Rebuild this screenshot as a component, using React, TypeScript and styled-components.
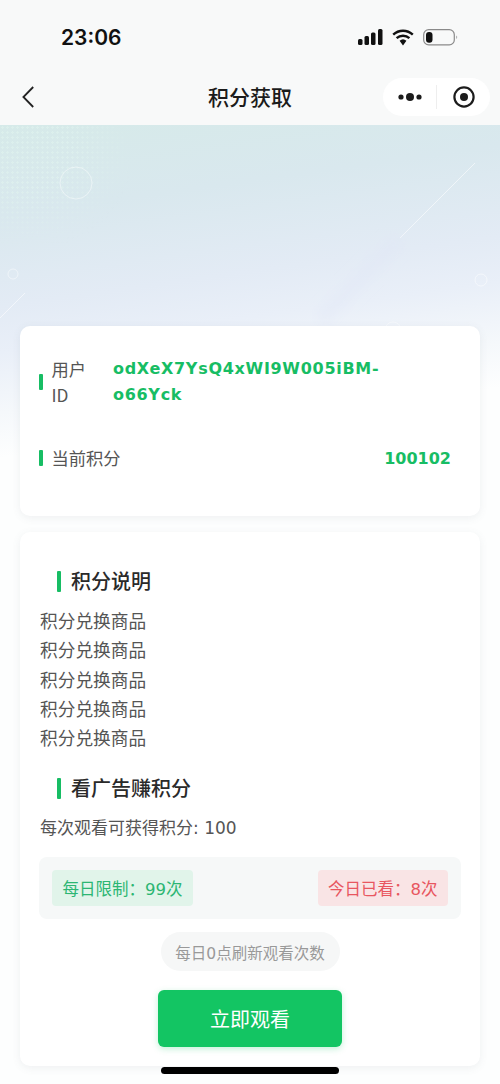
import React from "react";
import styled, { createGlobalStyle } from "styled-components";

const GlobalStyle = createGlobalStyle`
  html, body {
    margin: 0;
    padding: 0;
    background: #fdfefe;
  }
  * {
    box-sizing: border-box;
  }
`;

const CJK = `"Noto Sans CJK SC", sans-serif`;
const MIXED = `"DejaVu Sans", "Noto Sans CJK SC", sans-serif`;

const Phone = styled.div`
  position: relative;
  width: 500px;
  height: 1084px;
  overflow: hidden;
  font-family: ${CJK};
  color: #222;
`;

const TopArea = styled.header`
  height: 125px;
  background: #f8f9f9;
`;

const StatusBar = styled.div`
  height: 74px;
  display: flex;
  align-items: center;
  justify-content: space-between;
  padding: 0 42px 0 61px;
`;

const Clock = styled.span`
  font-family: "Inter", "Liberation Sans", sans-serif;
  font-size: 21px;
  font-weight: 600;
  color: #111;
`;

const StatusIcons = styled.div`
  display: flex;
  align-items: center;
  gap: 9px;
`;

const NavBar = styled.nav`
  height: 51px;
  display: flex;
  align-items: center;
  justify-content: space-between;
  padding: 0 10px 5px 22px;
  position: relative;
`;

const NavTitle = styled.h1`
  position: absolute;
  left: 0;
  right: 0;
  top: 4px;
  margin: 0;
  text-align: center;
  font-size: 21px;
  line-height: 36px;
  font-weight: 500;
  color: #1b1b1b;
`;

const Capsule = styled.div`
  width: 107px;
  height: 38px;
  border-radius: 19px;
  background: #fff;
  display: flex;
  align-items: center;
`;

const CapsuleSide = styled.div`
  flex: 1;
  display: flex;
  align-items: center;
  justify-content: center;
`;

const CapsuleDivider = styled.div`
  width: 1px;
  height: 24px;
  background: #eeeeee;
`;

const Main = styled.main`
  position: relative;
  height: 959px;
  padding: 201px 20px 0;
  background: linear-gradient(
    172deg,
    #d6eae9 0,
    #d9e8ee 90px,
    #e3ebf5 180px,
    #e9eff8 225px,
    #f5f8fb 285px,
    #fdfefe 330px
  );
`;

const HeroArt = styled.svg`
  position: absolute;
  top: 0;
  left: 0;
  width: 500px;
  height: 320px;
`;

const DotField = styled.div`
  position: absolute;
  top: 0;
  left: 0;
  width: 130px;
  height: 120px;
  background-image: radial-gradient(rgba(225, 245, 238, 0.5) 1px, transparent 1.2px);
  background-size: 5px 5px;
  mask-image: radial-gradient(ellipse at 20% 20%, #000 30%, transparent 75%);
`;

const CardStack = styled.div`
  position: relative;
  display: flex;
  flex-direction: column;
  gap: 16px;
`;

const InfoCard = styled.section`
  height: 190px;
  padding: 30px 29px 0 19px;
  display: flex;
  flex-direction: column;
  gap: 37px;
  background: #fff;
  border-radius: 10px;
  box-shadow: 0 2px 8px rgba(90, 100, 110, 0.09);
`;

const DetailCard = styled.section`
  height: 534px;
  padding: 34px 19px 0;
  background: #fff;
  border-radius: 10px;
  box-shadow: 0 2px 8px rgba(90, 100, 110, 0.09);
`;

const InfoRow = styled.div`
  display: flex;
  align-items: center;
`;

const InfoMark = styled.i`
  display: block;
  flex: none;
  width: 3.5px;
  height: 16px;
  border-radius: 1px;
  background: #17bd64;
  margin-right: 9px;
`;

const InfoLabel = styled.span<{ $narrow?: boolean }>`
  flex: none;
  width: ${(p) => (p.$narrow ? "40px" : "auto")};
  margin-right: ${(p) => (p.$narrow ? "21.5px" : "0")};
  font-size: 17.3px;
  line-height: 26px;
  color: #555;
`;

const InfoId = styled.span`
  width: 290px;
  font-family: ${MIXED};
  font-size: 16px;
  line-height: 26px;
  font-weight: 700;
  color: #17bd64;
  letter-spacing: 0.7px;
`;

const InfoPoints = styled.span`
  margin-left: auto;
  font-family: ${MIXED};
  font-size: 16px;
  font-weight: 700;
  color: #17bd64;
`;

const SectionTitle = styled.h2<{ $top: number }>`
  display: flex;
  align-items: center;
  gap: 10px;
  margin: ${(p) => p.$top}px 0 0 18px;
  font-size: 20px;
  line-height: 30px;
  font-weight: 500;
  color: #2a2a2a;

  &::before {
    content: "";
    width: 4px;
    height: 21px;
    background: #17bd64;
    border-radius: 1px;
  }
`;

const RuleList = styled.ul`
  list-style: none;
  margin: 10px 0 0 1px;
  padding: 0;
`;

const RuleItem = styled.li`
  font-size: 17.7px;
  line-height: 29.3px;
  color: #555;
`;

const EarnNote = styled.p`
  margin: 10px 0 0 1px;
  font-family: ${MIXED};
  font-size: 17px;
  line-height: 30px;
  color: #555;
`;

const LimitBar = styled.div`
  margin-top: 14px;
  height: 62px;
  padding: 0 13px;
  display: flex;
  align-items: center;
  justify-content: space-between;
  background: #f6f8f8;
  border-radius: 8px;
`;

const LimitTag = styled.span<{ $tone: "green" | "red" }>`
  height: 36px;
  padding: 0 10.5px;
  display: flex;
  align-items: center;
  border-radius: 4px;
  font-family: ${MIXED};
  font-size: 16.5px;
  color: ${(p) => (p.$tone === "green" ? "#2cb673" : "#e8565f")};
  background: ${(p) => (p.$tone === "green" ? "#e1f4ea" : "#f9e4e5")};
`;

const Centered = styled.div<{ $top: number }>`
  display: flex;
  justify-content: center;
  margin-top: ${(p) => p.$top}px;
`;

const RefreshHint = styled.span`
  height: 39px;
  width: 179px;
  display: flex;
  align-items: center;
  justify-content: center;
  border-radius: 20px;
  background: #f6f7f7;
  font-family: ${MIXED};
  font-size: 15.5px;
  color: #999;
`;

const WatchButton = styled.button`
  width: 184px;
  height: 57px;
  border: none;
  border-radius: 6px;
  background: #13c563;
  box-shadow: 0 2px 6px rgba(19, 197, 99, 0.25);
  color: #fff;
  font-family: ${CJK};
  font-size: 20px;
`;

const HomeIndicator = styled.div`
  position: absolute;
  left: 161px;
  bottom: 10px;
  width: 178px;
  height: 7px;
  border-radius: 4px;
  background: #000;
`;

const SignalIcon = () => (
  <svg width="25" height="16" viewBox="0 0 25 16">
    <rect x="0" y="10" width="4.5" height="6" rx="1.5" fill="#111" />
    <rect x="6.5" y="7" width="4.5" height="9" rx="1.5" fill="#111" />
    <rect x="13" y="3.5" width="4.5" height="12.5" rx="1.5" fill="#111" />
    <rect x="20" y="0" width="4.5" height="16" rx="1.5" fill="#111" />
  </svg>
);

const WifiIcon = () => (
  <svg width="22" height="17" viewBox="0 0 22 17" fill="none">
    <path d="M1.2 5.6a14.2 14.2 0 0 1 19.6 0" stroke="#111" strokeWidth="2.4" />
    <path d="M4.6 9.2a9.4 9.4 0 0 1 12.8 0" stroke="#111" strokeWidth="2.4" />
    <path d="M7.6 11.8L11 16.5l3.4-4.7a5 5 0 0 0-6.8 0z" fill="#111" />
  </svg>
);

const BatteryIcon = () => (
  <svg width="35" height="17" viewBox="0 0 35 17" fill="none">
    <rect x="0.7" y="0.7" width="30.6" height="15.2" rx="5" stroke="#8a8a8a" strokeWidth="1.2" />
    <rect x="3" y="3" width="6.5" height="10.8" rx="3" fill="#111" />
    <path d="M33.4 6.5c1 .5 1 3 0 3.6z" fill="#8a8a8a" />
  </svg>
);

const BackIcon = () => (
  <svg width="12" height="22" viewBox="0 0 12 22" fill="none">
    <path d="M11.2 1L1.4 11l9.8 10" stroke="#222" strokeWidth="1.8" />
  </svg>
);

const MoreIcon = () => (
  <svg width="26" height="10" viewBox="0 0 26 10" fill="#1c1c1c">
    <circle cx="4" cy="5" r="2.6" />
    <circle cx="13" cy="5" r="4" />
    <circle cx="22" cy="5" r="2.6" />
  </svg>
);

const TargetIcon = () => (
  <svg width="22" height="22" viewBox="0 0 22 22" fill="none">
    <circle cx="11" cy="11" r="9.6" stroke="#1c1c1c" strokeWidth="2.2" />
    <circle cx="11" cy="11" r="4" fill="#1c1c1c" />
  </svg>
);

const rules = Array.from({ length: 5 }, () => "积分兑换商品");

export default function App() {
  return (
    <Phone>
      <GlobalStyle />
      <TopArea>
        <StatusBar>
          <Clock>23:06</Clock>
          <StatusIcons>
            <SignalIcon />
            <WifiIcon />
            <BatteryIcon />
          </StatusIcons>
        </StatusBar>
        <NavBar>
          <BackIcon />
          <NavTitle>积分获取</NavTitle>
          <Capsule>
            <CapsuleSide>
              <MoreIcon />
            </CapsuleSide>
            <CapsuleDivider />
            <CapsuleSide>
              <TargetIcon />
            </CapsuleSide>
          </Capsule>
        </NavBar>
      </TopArea>

      <Main>
        <DotField />
        <HeroArt viewBox="0 0 500 320" fill="none">
          <defs>
            <filter id="soft">
              <feGaussianBlur stdDeviation="6" />
            </filter>
          </defs>
          <circle cx="76" cy="58" r="16" stroke="#fff" strokeOpacity="0.45" />
          <circle cx="13" cy="149" r="5" stroke="#fff" strokeOpacity="0.45" />
          <circle cx="481" cy="155" r="6" stroke="#fff" strokeOpacity="0.5" />
          <circle cx="393" cy="205" r="8" stroke="#fff" strokeOpacity="0.4" />
          <path d="M475 38L400 113" stroke="#fff" strokeOpacity="0.55" />
          <path d="M25 168L0 193" stroke="#fff" strokeOpacity="0.55" />
          <path d="M400 113L320 195" stroke="#dfe5f5" strokeWidth="16" strokeOpacity="0.35" filter="url(#soft)" />
        </HeroArt>

        <CardStack>
          <InfoCard>
            <InfoRow>
              <InfoMark />
              <InfoLabel $narrow>用户ID</InfoLabel>
              <InfoId>odXeX7YsQ4xWI9W005iBM-o66Yck</InfoId>
            </InfoRow>
            <InfoRow>
              <InfoMark />
              <InfoLabel>当前积分</InfoLabel>
              <InfoPoints>100102</InfoPoints>
            </InfoRow>
          </InfoCard>

          <DetailCard>
            <SectionTitle $top={0}>积分说明</SectionTitle>
            <RuleList>
              {rules.map((text, i) => (
                <RuleItem key={i}>{text}</RuleItem>
              ))}
            </RuleList>
            <SectionTitle $top={21}>看广告赚积分</SectionTitle>
            <EarnNote>每次观看可获得积分: 100</EarnNote>
            <LimitBar>
              <LimitTag $tone="green">每日限制：99次</LimitTag>
              <LimitTag $tone="red">今日已看：8次</LimitTag>
            </LimitBar>
            <Centered $top={13}>
              <RefreshHint>每日0点刷新观看次数</RefreshHint>
            </Centered>
            <Centered $top={19}>
              <WatchButton>立即观看</WatchButton>
            </Centered>
          </DetailCard>
        </CardStack>
      </Main>
      <HomeIndicator />
    </Phone>
  );
}
